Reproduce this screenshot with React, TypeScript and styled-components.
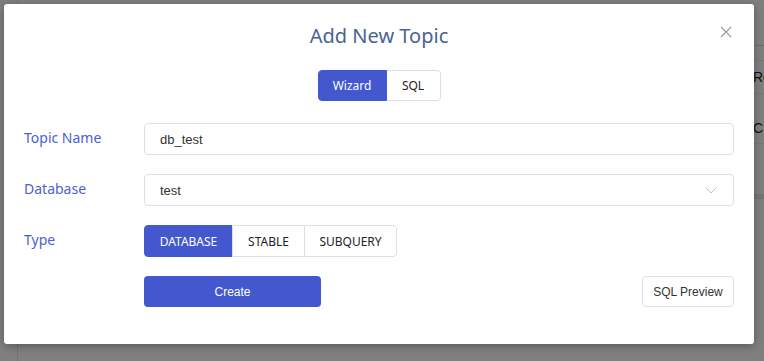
import React from "react";
import styled, { createGlobalStyle } from "styled-components";

const Global = createGlobalStyle`
  html, body { margin: 0; padding: 0; background: #fff; }
  body { font-family: "Noto Sans", "Open Sans", sans-serif; }
  * { box-sizing: border-box; }
`;

const Stage = styled.div`
  position: relative;
  width: 764px;
  height: 361px;
  overflow: hidden;
  background: #fff;
`;

const Page = styled.div`
  display: flex;
  width: 100%;
  height: 100%;
`;

const Sidebar = styled.div`
  width: 18px;
  flex: none;
  border-right: 1px solid #e2e4ea;
`;

const Main = styled.div`
  flex: 1;
  display: flex;
  flex-direction: column;
  padding-top: 45px;
`;

const TableLine = styled.div<{ $h: number; $dark?: boolean }>`
  height: ${(p) => p.$h}px;
  border-top: 1px solid ${(p) => (p.$dark ? "#d6d8de" : "#ebeef5")};
  display: flex;
  align-items: center;
  padding-left: 735px;
  font-family: "Liberation Sans", Arial, sans-serif;
  font-size: 14px;
  color: #222;
  white-space: nowrap;
`;

const Band = styled.div`
  height: 5px;
  margin-top: 50px;
  background: #e6e8ee;
`;

const Overlay = styled.div`
  position: absolute;
  inset: 0;
  background: rgba(0, 0, 0, 0.5);
`;

const Modal = styled.div`
  position: absolute;
  left: 4px;
  top: 4px;
  width: 750px;
  height: 340px;
  background: #fff;
  border-radius: 3px;
  box-shadow: 0 2px 8px rgba(0, 0, 0, 0.3);
  padding: 18px 20px 0 20px;
  display: flex;
  flex-direction: column;
`;

const Title = styled.h2`
  margin: 0;
  text-align: center;
  font-family: "Noto Sans", "Open Sans", sans-serif;
  font-weight: 400;
  font-size: 20px;
  line-height: 28px;
  color: #4a6491;
`;

const Close = styled.button`
  position: absolute;
  right: 20px;
  top: 20px;
  width: 16px;
  height: 16px;
  padding: 0;
  border: none;
  background: none;
  display: flex;
  align-items: center;
  justify-content: center;
  color: #9a9a9a;
  cursor: pointer;
`;

const ModeSwitch = styled.div`
  margin: 20px auto 0;
  display: flex;
  height: 31px;
`;

const ModeButton = styled.button<{ $active?: boolean; $w: number }>`
  width: ${(p) => p.$w}px;
  height: 100%;
  margin: 0;
  padding: 0;
  font-family: "Noto Sans", "Open Sans", sans-serif;
  font-size: 12px;
  font-weight: 400;
  color: ${(p) => (p.$active ? "#fff" : "#222")};
  background: ${(p) => (p.$active ? "#4358cf" : "#fff")};
  border: 1px solid ${(p) => (p.$active ? "#4358cf" : "#dcdfe6")};
  &:first-child { border-radius: 4px 0 0 4px; }
  &:last-child { border-radius: 0 4px 4px 0; border-left: none; }
`;

const Form = styled.div`
  margin-top: 22px;
  display: flex;
  flex-direction: column;
  gap: 19px;
`;

const Row = styled.div`
  display: flex;
  align-items: center;
  height: 32px;
`;

const Label = styled.label`
  width: 120px;
  flex: none;
  font-family: "Noto Sans", "Open Sans", sans-serif;
  font-size: 14px;
  line-height: 20px;
  margin-top: -2px;
  color: #4b5fd4;
`;

const Field = styled.div`
  flex: 1;
  height: 32px;
  border: 1px solid #dcdfe6;
  border-radius: 4px;
  display: flex;
  align-items: center;
  padding: 0 16px 0 15px;
  font-family: "Liberation Sans", Arial, sans-serif;
  font-size: 13px;
  color: #333;
`;

const FieldText = styled.span`
  flex: 1;
`;

const Segmented = styled.div`
  display: flex;
  height: 32px;
`;

const SegButton = styled.button<{ $active?: boolean; $w: number }>`
  width: ${(p) => p.$w}px;
  height: 100%;
  margin: 0;
  padding: 0;
  font-family: "Noto Sans", "Open Sans", sans-serif;
  font-size: 12px;
  font-weight: 400;
  color: ${(p) => (p.$active ? "#fff" : "#222")};
  background: ${(p) => (p.$active ? "#4358cf" : "#fff")};
  border: 1px solid ${(p) => (p.$active ? "#4358cf" : "#dcdfe6")};
  & + & { margin-left: -1px; }
  &:first-child { border-radius: 4px 0 0 4px; }
  &:last-child { border-radius: 0 4px 4px 0; }
`;

const Actions = styled.div`
  display: flex;
  align-items: center;
  justify-content: space-between;
  padding-left: 120px;
  height: 31px;
`;

const PrimaryButton = styled.button`
  width: 177px;
  height: 31px;
  padding: 0;
  border: none;
  border-radius: 4px;
  background: #4358cf;
  color: #fff;
  font-family: "Liberation Sans", Arial, sans-serif;
  font-size: 12px;
  white-space: nowrap;
`;

const PlainButton = styled.button`
  width: 92px;
  height: 31px;
  padding: 0;
  border: 1px solid #dcdfe6;
  border-radius: 4px;
  background: #fff;
  color: #333;
  font-family: "Liberation Sans", Arial, sans-serif;
  font-size: 12px;
  white-space: nowrap;
`;

export default function App() {
  return (
    <Stage>
      <Global />
      <Page>
        <Sidebar />
        <Main>
          <TableLine $h={15} $dark />
          <TableLine $h={33}>Re</TableLine>
          <TableLine $h={50}>
            <span style={{ paddingTop: 18 }}>C</span>
          </TableLine>
          <TableLine $h={1} />
          <Band />
        </Main>
      </Page>
      <Overlay />
      <Modal>
        <Title>Add New Topic</Title>
        <Close aria-label="close">
          <svg width="12" height="12" viewBox="0 0 12 12">
            <path d="M1 1 L11 11 M11 1 L1 11" stroke="currentColor" strokeWidth="1.1" fill="none" />
          </svg>
        </Close>
        <ModeSwitch>
          <ModeButton $active $w={69}>Wizard</ModeButton>
          <ModeButton $w={54}>SQL</ModeButton>
        </ModeSwitch>
        <Form>
          <Row>
            <Label>Topic Name</Label>
            <Field>
              <FieldText>db_test</FieldText>
            </Field>
          </Row>
          <Row>
            <Label>Database</Label>
            <Field>
              <FieldText>test</FieldText>
              <svg width="12" height="7" viewBox="0 0 12 7">
                <path d="M0.5 0.5 L6 6 L11.5 0.5" stroke="#c0c4cc" strokeWidth="1" fill="none" />
              </svg>
            </Field>
          </Row>
          <Row>
            <Label>Type</Label>
            <Segmented>
              <SegButton $active $w={89}>DATABASE</SegButton>
              <SegButton $w={73}>STABLE</SegButton>
              <SegButton $w={93}>SUBQUERY</SegButton>
            </Segmented>
          </Row>
          <Actions>
            <PrimaryButton>Create</PrimaryButton>
            <PlainButton>SQL Preview</PlainButton>
          </Actions>
        </Form>
      </Modal>
    </Stage>
  );
}
